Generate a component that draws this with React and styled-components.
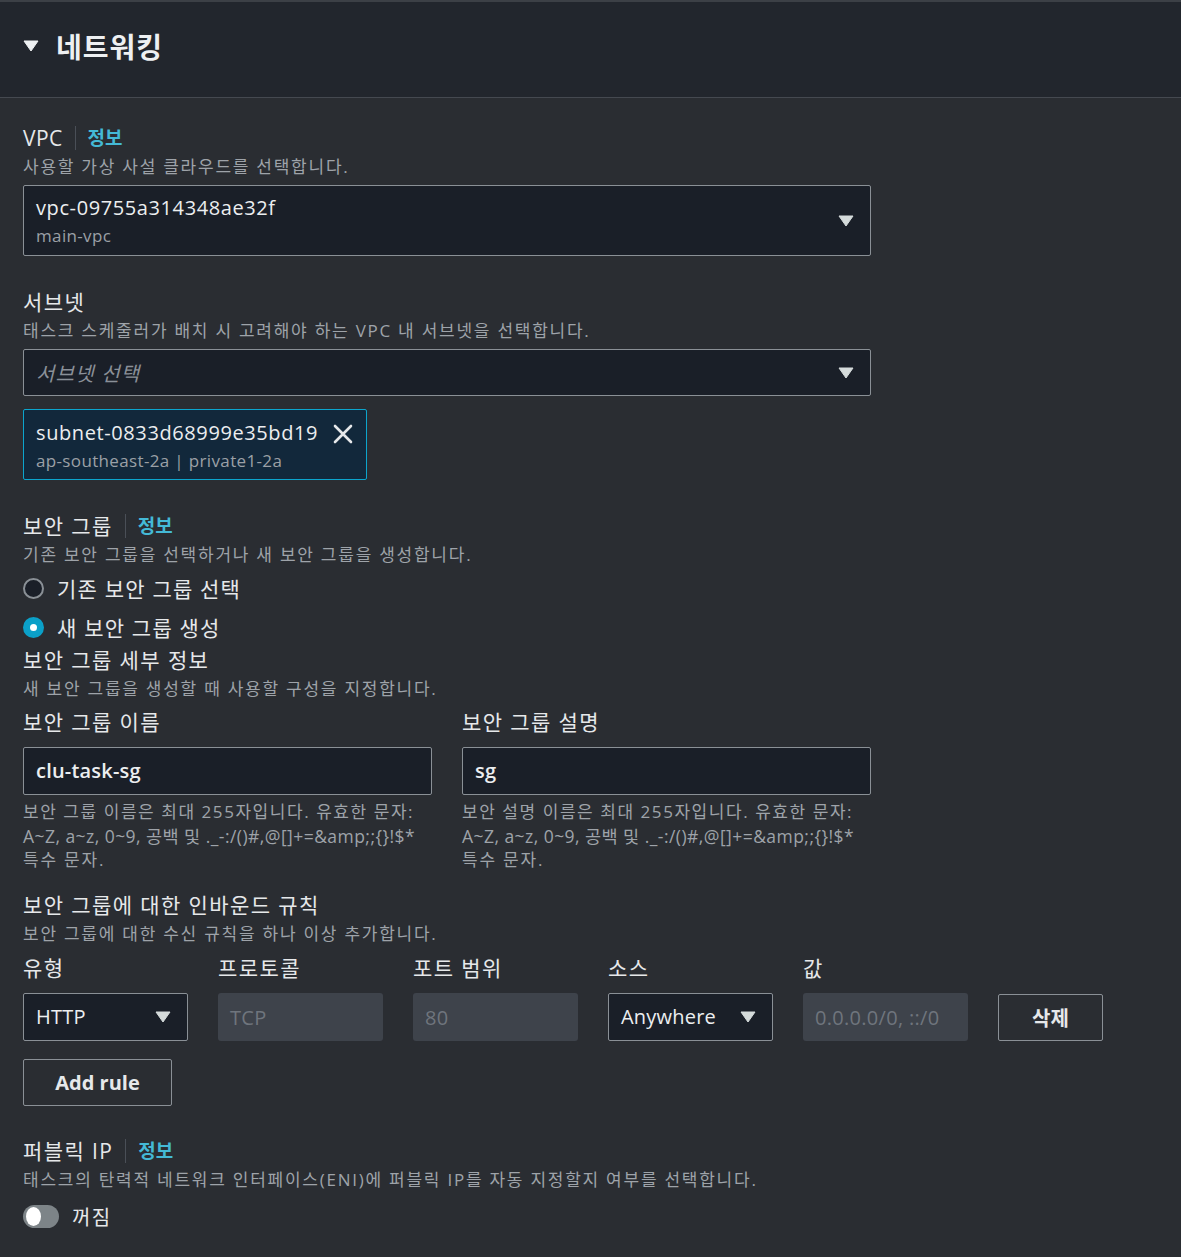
import React from "react";
import styled, { createGlobalStyle } from "styled-components";

const Global = createGlobalStyle`
  html, body { margin: 0; padding: 0; background: #2a2d32; }
  body { font-family: "Open Sans", "Noto Sans CJK KR", sans-serif; color: #e6e8ea; }
  * { box-sizing: border-box; }
`;

const Page = styled.div`
  min-height: 1257px;
  background: #2a2d32;
`;

const Header = styled.div`
  height: 98px;
  background: #22262d;
  border-top: 2px solid #3c4046;
  border-bottom: 1px solid #454950;
  display: flex;
  align-items: center;
  gap: 17px;
  padding: 0 0 8px 23px;
`;

const Title = styled.h2`
  margin: 0;
  font-size: 28px;
  font-weight: 700;
  color: #eef0f2;
  letter-spacing: 1px;
`;

const Body = styled.div`
  padding: 25px 23px 20px;
  width: 895px;
`;

const LabelRow = styled.div`
  display: flex;
  align-items: center;
  height: 28px;
  padding-top: 2px;
  margin-top: ${(p) => p.$mt || 0}px;
`;

const Label = styled.span`
  font-size: 21px;
  line-height: 28px;
  color: #e6e8ea;
  letter-spacing: ${(p) => (p.$latin ? 0.4 : 1.4)}px;
`;

const Divider = styled.span`
  width: 1px;
  height: 24px;
  background: #4a4f57;
  margin: 0 12px;
`;

const InfoLink = styled.a`
  font-size: 19px;
  font-weight: 700;
  color: #44b9d6;
  line-height: 28px;
`;

const Desc = styled.div`
  font-size: 17px;
  line-height: 24px;
  padding-top: 4px;
  color: #9ea3a9;
  white-space: nowrap;
  letter-spacing: 1.75px;
`;

const SelectBox = styled.div`
  margin-top: 6px;
  width: 848px;
  height: ${(p) => p.$h || 48}px;
  background: #1a1f28;
  border: 1px solid #8a9096;
  border-radius: 2px;
  display: flex;
  align-items: center;
  justify-content: space-between;
  padding: 0 16px 0 12px;
`;

const SelectText = styled.div`
  display: flex;
  flex-direction: column;
`;

const Value = styled.span`
  font-size: 20px;
  line-height: 30px;
  color: #eceef0;
  letter-spacing: ${(p) => (p.$tight ? 0.2 : 0.6)}px;
  font-weight: ${(p) => (p.$bold ? 600 : 400)};
`;

const SubValue = styled.span`
  font-size: 17px;
  line-height: 26px;
  color: #9ba0a6;
  letter-spacing: 0.35px;
`;

const Placeholder = styled.span`
  font-size: 20px;
  font-style: italic;
  color: #8a9098;
  letter-spacing: 1.2px;
`;

const Caret = () => (
  <svg width="16" height="12" viewBox="0 0 16 12">
    <path d="M1 1h14L8 11z" fill="#d5dbdb" stroke="#d5dbdb" strokeWidth="1" strokeLinejoin="round" />
  </svg>
);

const Token = styled.div`
  margin-top: 13px;
  width: 344px;
  height: 71px;
  background: #12283b;
  border: 1px solid #0ca5cd;
  border-radius: 2px;
  display: flex;
  align-items: flex-start;
  justify-content: space-between;
  padding: 8px 13px 0 12px;
`;

const CloseBtn = styled.span`
  display: flex;
  margin-top: 6px;
`;

const RadioGroup = styled.div`
  margin-top: 5px;
  display: flex;
  flex-direction: column;
  gap: 7px;
`;

const RadioRow = styled.label`
  display: flex;
  align-items: center;
  gap: 13px;
  height: 32px;
`;

const RadioCircle = styled.span`
  width: 21px;
  height: 21px;
  border-radius: 50%;
  flex: none;
  background: ${(p) => (p.$on ? "#0ba0c8" : "#1a1f28")};
  border: 2px solid ${(p) => (p.$on ? "#0ba0c8" : "#8a9096")};
  display: flex;
  align-items: center;
  justify-content: center;
  &::after {
    content: "";
    display: ${(p) => (p.$on ? "block" : "none")};
    width: 7px;
    height: 7px;
    border-radius: 50%;
    background: #fff;
  }
`;

const RadioText = styled.span`
  font-size: 21px;
  color: #e6e8ea;
  letter-spacing: 1.2px;
`;

const TwoCol = styled.div`
  display: grid;
  grid-template-columns: 409px 409px;
  column-gap: 30px;
  margin-top: 7px;
`;

const Field = styled.div`
  display: flex;
  flex-direction: column;
`;

const TextInput = styled.div`
  margin-top: 11px;
  height: 48px;
  background: #1a1f28;
  border: 1px solid #8a9096;
  border-radius: 2px;
  display: flex;
  align-items: center;
  padding: 0 12px;
`;

const Help = styled.div`
  margin-top: 5px;
  display: flex;
  flex-direction: column;
`;

const HelpLine = styled.span`
  font-size: ${(p) => (p.$latin ? 17.5 : 17)}px;
  line-height: 24px;
  color: #9ea3a9;
  white-space: nowrap;
  letter-spacing: ${(p) => p.$ls}px;
`;

const RuleGrid = styled.div`
  display: grid;
  grid-template-columns: repeat(5, 165px) 105px;
  column-gap: 30px;
  margin-top: ${(p) => p.$mt || 0}px;
  align-items: center;
`;

const ColLabel = styled.span`
  font-size: 21px;
  line-height: 28px;
  color: #e6e8ea;
  letter-spacing: 1.4px;
`;

const RuleSelect = styled.div`
  height: 48px;
  background: #1a1f28;
  border: 1px solid #8a9096;
  border-radius: 2px;
  display: flex;
  align-items: center;
  justify-content: space-between;
  padding: 0 16px 0 12px;
`;

const Disabled = styled.div`
  height: 48px;
  background: #3e434b;
  border-radius: 3px;
  display: flex;
  align-items: center;
  padding: 0 12px;
  font-size: 20px;
  color: #6f757d;
  letter-spacing: 0.3px;
`;

const Button = styled.button`
  height: 47px;
  width: ${(p) => p.$w}px;
  margin-top: ${(p) => p.$mt || 0}px;
  background: transparent;
  border: 1px solid #8a9096;
  border-radius: 2px;
  color: #e6e8ea;
  font-family: inherit;
  font-size: 20px;
  font-weight: 700;
  padding: 0;
`;

const ToggleRow = styled.div`
  margin-top: 8px;
  height: 32px;
  display: flex;
  align-items: center;
  gap: 13px;
`;

const Toggle = styled.span`
  width: 36px;
  height: 23px;
  border-radius: 12px;
  background: #7d8488;
  display: flex;
  align-items: center;
  padding: 0 3px;
  &::before {
    content: "";
    width: 15px;
    height: 19px;
    border-radius: 50%;
    background: #fff;
  }
`;

const ToggleText = styled.span`
  font-size: 20px;
  color: #e6e8ea;
  letter-spacing: 1.4px;
`;

const HelpText = ({ kind }) => (
  <Help>
    <HelpLine $ls={1.55}>보안 {kind} 이름은 최대 255자입니다. 유효한 문자:</HelpLine>
    <HelpLine $ls={0.45} $latin>
      A~Z, a~z, 0~9, 공백 및 ._-:/()#,@[]+=&amp;amp;;{"{}"}!$*
    </HelpLine>
    <HelpLine $ls={1.8}>특수 문자.</HelpLine>
  </Help>
);

export default function App() {
  return (
    <Page>
      <Global />
      <Header>
        <svg width="16" height="12" viewBox="0 0 16 12">
          <path d="M1 1h14L8 11z" fill="#eef0f2" stroke="#eef0f2" strokeWidth="1" strokeLinejoin="round" />
        </svg>
        <Title>네트워킹</Title>
      </Header>
      <Body>
        <LabelRow>
          <Label $latin>VPC</Label>
          <Divider />
          <InfoLink>정보</InfoLink>
        </LabelRow>
        <Desc>사용할 가상 사설 클라우드를 선택합니다.</Desc>
        <SelectBox $h={71}>
          <SelectText>
            <Value>vpc-09755a314348ae32f</Value>
            <SubValue>main-vpc</SubValue>
          </SelectText>
          <Caret />
        </SelectBox>

        <LabelRow $mt={31}>
          <Label>서브넷</Label>
        </LabelRow>
        <Desc>태스크 스케줄러가 배치 시 고려해야 하는 VPC 내 서브넷을 선택합니다.</Desc>
        <SelectBox $h={47}>
          <Placeholder>서브넷 선택</Placeholder>
          <Caret />
        </SelectBox>
        <Token>
          <SelectText>
            <Value>subnet-0833d68999e35bd19</Value>
            <SubValue>ap-southeast-2a | private1-2a</SubValue>
          </SelectText>
          <CloseBtn>
            <svg width="20" height="20" viewBox="0 0 20 20">
              <path d="M2 2l16 16M18 2L2 18" stroke="#e6e8ea" strokeWidth="2.6" strokeLinecap="round" />
            </svg>
          </CloseBtn>
        </Token>

        <LabelRow $mt={31}>
          <Label>보안 그룹</Label>
          <Divider />
          <InfoLink>정보</InfoLink>
        </LabelRow>
        <Desc>기존 보안 그룹을 선택하거나 새 보안 그룹을 생성합니다.</Desc>
        <RadioGroup>
          <RadioRow>
            <RadioCircle />
            <RadioText>기존 보안 그룹 선택</RadioText>
          </RadioRow>
          <RadioRow>
            <RadioCircle $on />
            <RadioText>새 보안 그룹 생성</RadioText>
          </RadioRow>
        </RadioGroup>
        <LabelRow $mt={2}>
          <Label>보안 그룹 세부 정보</Label>
        </LabelRow>
        <Desc>새 보안 그룹을 생성할 때 사용할 구성을 지정합니다.</Desc>
        <TwoCol>
          <Field>
            <ColLabel>보안 그룹 이름</ColLabel>
            <TextInput>
              <Value $bold $tight>clu-task-sg</Value>
            </TextInput>
            <HelpText kind="그룹" />
          </Field>
          <Field>
            <ColLabel>보안 그룹 설명</ColLabel>
            <TextInput>
              <Value $bold $tight>sg</Value>
            </TextInput>
            <HelpText kind="설명" />
          </Field>
        </TwoCol>

        <LabelRow $mt={18}>
          <Label>보안 그룹에 대한 인바운드 규칙</Label>
        </LabelRow>
        <Desc>보안 그룹에 대한 수신 규칙을 하나 이상 추가합니다.</Desc>
        <RuleGrid $mt={8}>
          <ColLabel>유형</ColLabel>
          <ColLabel>프로토콜</ColLabel>
          <ColLabel>포트 범위</ColLabel>
          <ColLabel>소스</ColLabel>
          <ColLabel>값</ColLabel>
          <span />
        </RuleGrid>
        <RuleGrid $mt={11}>
          <RuleSelect>
            <Value $tight>HTTP</Value>
            <Caret />
          </RuleSelect>
          <Disabled>TCP</Disabled>
          <Disabled>80</Disabled>
          <RuleSelect>
            <Value $tight>Anywhere</Value>
            <Caret />
          </RuleSelect>
          <Disabled>0.0.0.0/0, ::/0</Disabled>
          <Button $w={105}>삭제</Button>
        </RuleGrid>
        <Button $w={149} $mt={18}>Add rule</Button>

        <LabelRow $mt={30}>
          <Label>퍼블릭 IP</Label>
          <Divider />
          <InfoLink>정보</InfoLink>
        </LabelRow>
        <Desc>태스크의 탄력적 네트워크 인터페이스(ENI)에 퍼블릭 IP를 자동 지정할지 여부를 선택합니다.</Desc>
        <ToggleRow>
          <Toggle />
          <ToggleText>꺼짐</ToggleText>
        </ToggleRow>
      </Body>
    </Page>
  );
}
